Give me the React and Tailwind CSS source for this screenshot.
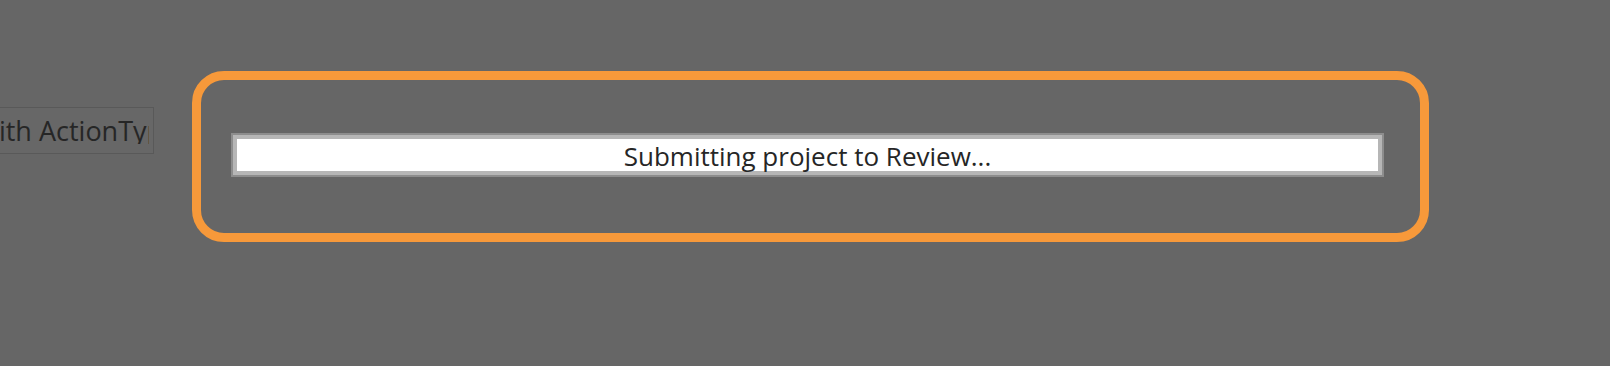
export default function App() {
  return (
    <div className="w-[1610px] h-[366px] bg-[#666666] overflow-hidden pt-[71px] font-['Open_Sans',_sans-serif]">
      <div className="flex items-start">
        {/* partially hidden field on the left */}
        <div className="mt-[36px] w-[154px] h-[47px] border-y border-r border-[#595959] bg-[#676767] flex items-center pl-[1px] pr-[4px]">
          <div className="w-full overflow-hidden">
            <span className="block whitespace-nowrap ml-[-23px] text-[27px] leading-none text-[#262626]">
              with ActionType
            </span>
          </div>
        </div>

        {/* highlighted progress panel */}
        <div className="ml-[38px] w-[1237px] h-[171px] border-[9px] border-[#f7993a] rounded-[32px] pt-[53px] pl-[30px]">
          <div className="w-[1153px] h-[44px] border-2 border-[#8d8d8d]">
            <div className="h-full border-4 border-[#b6b6b6] bg-white flex items-center justify-center">
              <span className="text-[26px] leading-none text-[#262626] pt-[2px]">Submitting project to Review...</span>
            </div>
          </div>
        </div>
      </div>
    </div>
  );
}
